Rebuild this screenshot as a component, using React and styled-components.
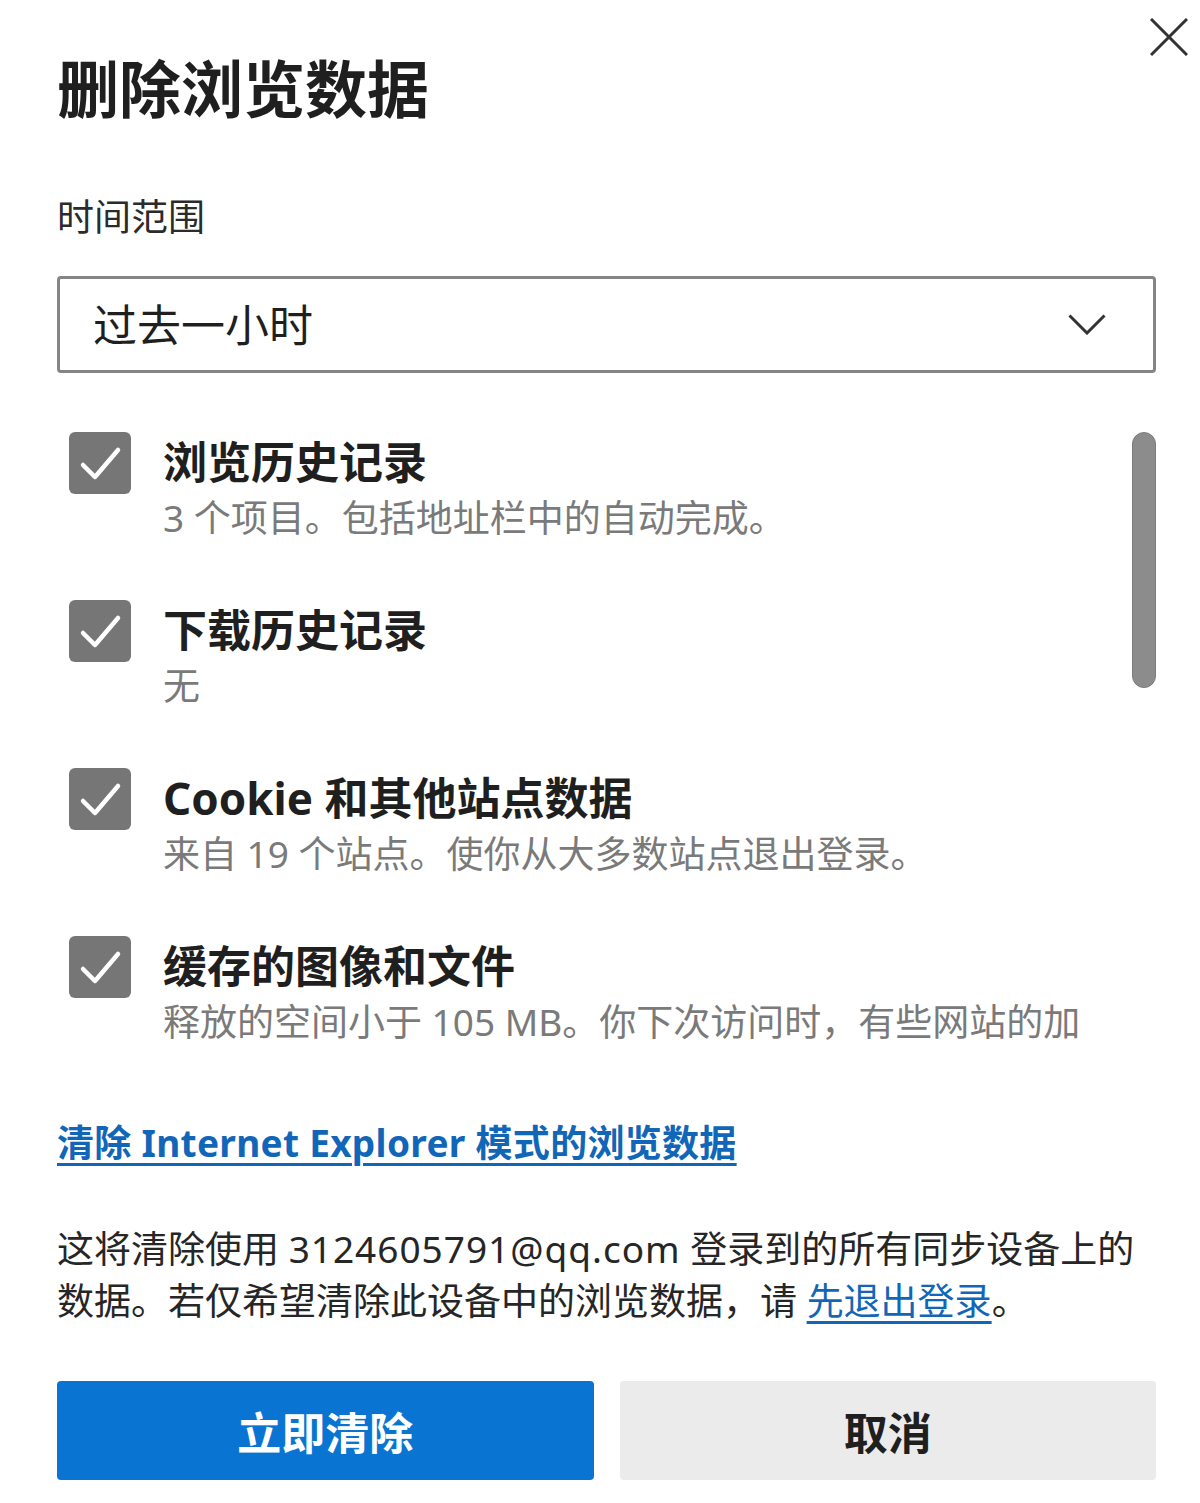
import React from "react";
import styled, { createGlobalStyle } from "styled-components";

const Global = createGlobalStyle`
  html, body { margin: 0; padding: 0; background: #ffffff; }
  body {
    font-family: "Noto Sans", "Noto Sans CJK SC", sans-serif;
    color: #1a1a1a;
  }
  * { box-sizing: border-box; }
`;

const Dialog = styled.div`
  width: 1200px;
  height: 1503px;
  padding: 0 44px 0 57px;
  display: flex;
  flex-direction: column;
  background: #fff;
  overflow: hidden;
`;

const Header = styled.div`
  display: flex;
  align-items: flex-start;
  justify-content: space-between;
`;

const Title = styled.h1`
  margin: 49px 0 0;
  font-size: 62px;
  line-height: 80px;
  font-weight: 700;
  color: #1f1f1f;
  letter-spacing: 0;
`;

const CloseButton = styled.button`
  margin: 18px -32px 0 0;
  width: 38px;
  height: 38px;
  padding: 0;
  border: none;
  background: transparent;
  display: flex;
  align-items: center;
  justify-content: center;
  cursor: pointer;
`;

const Label = styled.div`
  margin-top: 63px;
  font-size: 37px;
  line-height: 50px;
  color: #2b2b2b;
`;

const Select = styled.div`
  margin-top: 34px;
  height: 97px;
  border: 3px solid #858585;
  border-radius: 4px;
  display: flex;
  align-items: center;
  justify-content: space-between;
  padding: 0 47px 0 33px;
  font-size: 44px;
  line-height: 60px;
  color: #1f1f1f;
`;

const ListFrame = styled.div`
  margin-top: 59px;
  height: 624px;
  display: flex;
  overflow: hidden;
`;

const List = styled.div`
  flex: 1;
  display: flex;
  flex-direction: column;
  gap: 56px;
  padding-left: 12px;
`;

const Track = styled.div`
  width: 24px;
  flex: none;
`;

const Thumb = styled.div`
  width: 24px;
  height: 256px;
  border-radius: 12px;
  background: #8c8c8c;
  border: 1px solid #7c7c7c;
`;

const Item = styled.div`
  display: flex;
  align-items: flex-start;
  gap: 32px;
`;

const Box = styled.div`
  width: 62px;
  height: 62px;
  flex: none;
  border-radius: 6px;
  background: #767676;
  display: flex;
  align-items: center;
  justify-content: center;
`;

const ItemText = styled.div`
  width: 935px;
  display: flex;
  flex-direction: column;
`;

const ItemTitle = styled.div`
  font-size: 44px;
  line-height: 60px;
  font-weight: 700;
  color: #1f1f1f;
`;

const ItemSub = styled.div`
  font-size: 37px;
  line-height: 52px;
  color: #7a7a7a;
`;

const Link = styled.a`
  margin-top: 62px;
  align-self: flex-start;
  font-size: 37px;
  line-height: 50px;
  font-weight: 700;
  color: #1266b8;
  letter-spacing: 0.3px;
  text-decoration: underline;
  text-decoration-thickness: 3px;
  text-underline-offset: 6px;
  cursor: pointer;
`;

const Paragraph = styled.p`
  margin: 55px 0 0;
  padding-right: 8px;
  font-size: 37px;
  line-height: 52px;
  color: #262626;
`;

const Latin = styled.span`
  letter-spacing: 1px;
`;

const InlineLink = styled.a`
  color: #1266b8;
  text-decoration: underline;
  text-decoration-thickness: 3px;
  text-underline-offset: 6px;
  cursor: pointer;
`;

const Buttons = styled.div`
  margin-top: 54px;
  display: grid;
  grid-template-columns: 1fr 1fr;
  gap: 26px;
`;

const Button = styled.button`
  height: 99px;
  border: none;
  border-radius: 4px;
  font-family: "Noto Sans", "Noto Sans CJK SC", sans-serif;
  font-size: 44px;
  font-weight: 700;
  background: ${(p) => (p.$primary ? "#0a74d2" : "#ebebeb")};
  color: ${(p) => (p.$primary ? "#ffffff" : "#1f1f1f")};
  cursor: pointer;
`;

const CheckIcon = () => (
  <svg width="62" height="62" viewBox="0 0 62 62">
    <polyline
      points="14,33 26,45 49,18"
      fill="none"
      stroke="#ffffff"
      strokeWidth="4.5"
      strokeLinecap="round"
      strokeLinejoin="round"
    />
  </svg>
);

const items = [
  { title: "浏览历史记录", sub: "3 个项目。包括地址栏中的自动完成。" },
  { title: "下载历史记录", sub: "无" },
  { title: "Cookie 和其他站点数据", sub: "来自 19 个站点。使你从大多数站点退出登录。" },
  {
    title: "缓存的图像和文件",
    sub: "释放的空间小于 105 MB。你下次访问时，有些网站的加载速度可能会更慢。",
  },
];

export default function App() {
  return (
    <>
      <Global />
      <Dialog>
        <Header>
          <Title>删除浏览数据</Title>
          <CloseButton aria-label="关闭">
            <svg width="38" height="38" viewBox="0 0 38 38">
              <path d="M1 1 L37 37 M37 1 L1 37" stroke="#333" strokeWidth="3" fill="none" />
            </svg>
          </CloseButton>
        </Header>
        <Label>时间范围</Label>
        <Select>
          <span>过去一小时</span>
          <svg width="38" height="21" viewBox="0 0 38 21">
            <polyline points="1.5,1.5 19,19 36.5,1.5" fill="none" stroke="#333" strokeWidth="3" />
          </svg>
        </Select>
        <ListFrame>
          <List>
            {items.map((it) => (
              <Item key={it.title}>
                <Box>
                  <CheckIcon />
                </Box>
                <ItemText>
                  <ItemTitle>{it.title}</ItemTitle>
                  <ItemSub>{it.sub}</ItemSub>
                </ItemText>
              </Item>
            ))}
          </List>
          <Track>
            <Thumb />
          </Track>
        </ListFrame>
        <Link>清除 Internet Explorer 模式的浏览数据</Link>
        <Paragraph>
          这将清除使用 <Latin>3124605791@qq.com</Latin> 登录到的所有同步设备上的数据。若仅希望清除此设备中的浏览数据，请{" "}
          <InlineLink>先退出登录</InlineLink>。
        </Paragraph>
        <Buttons>
          <Button $primary>立即清除</Button>
          <Button>取消</Button>
        </Buttons>
      </Dialog>
    </>
  );
}
